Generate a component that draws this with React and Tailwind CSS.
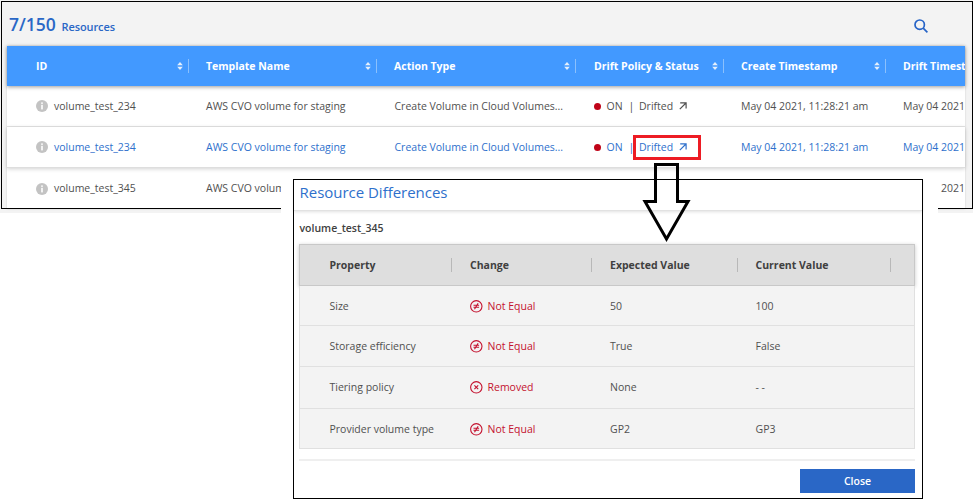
import React from "react";

const GRID = "grid grid-cols-[182px_188px_199px_148px_162px_79px]";
const DIFF_GRID = "grid grid-cols-[152px_140px_146px_153px_25px]";

const columns = [
  { label: "ID", pad: "pl-[29px]" },
  { label: "Template Name", pad: "pl-[17px]" },
  { label: "Action Type", pad: "pl-[17px]" },
  { label: "Drift Policy & Status", pad: "pl-[18px]" },
  { label: "Create Timestamp", pad: "pl-[17px]" },
  { label: "Drift Timest", pad: "pl-[17px]", last: true },
];

const diffs = [
  { property: "Size", change: "Not Equal", expected: "50", current: "100", h: "h-[40px] pt-[2px]" },
  { property: "Storage efficiency", change: "Not Equal", expected: "True", current: "False", h: "h-[41px]" },
  { property: "Tiering policy", change: "Removed", expected: "None", current: "- -", h: "h-[42px]" },
  { property: "Provider volume type", change: "Not Equal", expected: "GP2", current: "GP3", h: "h-[40px] pt-[1px]" },
];

function SortIcon() {
  return (
    <svg width="6" height="8" viewBox="0 0 6 8" className="mr-[5px] shrink-0" fill="#e4effb">
      <path d="M3 0 5.8 3.3H0.2Z" />
      <path d="M3 8 5.8 4.7H0.2Z" />
    </svg>
  );
}

function InfoIcon() {
  return (
    <svg width="12" height="12" viewBox="0 0 12 12" className="mr-[6px] shrink-0">
      <circle cx="6" cy="6" r="6" fill="#c3c3c3" />
      <rect x="5.2" y="2.4" width="1.6" height="1.5" fill="#fff" />
      <rect x="5.2" y="4.8" width="1.6" height="4.6" fill="#fff" />
    </svg>
  );
}

function DriftArrow() {
  return (
    <svg width="8" height="8" viewBox="0 0 8 8" className="ml-[6px] shrink-0" fill="none" stroke="currentColor" strokeWidth="1.2">
      <path d="M1.2 0.9H7.1V6.6M7 1 0.8 7.2" />
    </svg>
  );
}

function ChangeIcon({ removed }) {
  return (
    <svg width="13" height="13" viewBox="0 0 13 13" className="mr-[5px] shrink-0" fill="none" stroke="#c4122f" strokeWidth="1.1">
      <circle cx="6.3" cy="6.3" r="5.7" />
      {removed ? <path d="M4.4 4.4 8.2 8.2M8.2 4.4 4.4 8.2" /> : <path d="M3.5 5.3H9.1M3.5 7.3H9.1M8.1 3.3 4.5 9.3" />}
    </svg>
  );
}

function ResourceRow({ id, className, covered }) {
  return (
    <div className={`${GRID} items-center whitespace-nowrap overflow-hidden text-[10.5px] ${className}`}>
      <div className="flex items-center pl-[29px]">
        <InfoIcon />
        <span className="pt-px">{id}</span>
      </div>
      {covered ? (
        <>
          <div className="pl-[17px] pt-px">AWS CVO volum</div>
          <div className="col-start-6 pl-[55px] pt-px">2021</div>
        </>
      ) : (
        <>
          <div className="pl-[17px] pt-px">AWS CVO volume for staging</div>
          <div className="pl-[17.5px] pt-px">Create Volume in Cloud Volumes...</div>
          <div className="flex items-center pl-[17.5px]">
            <span className="size-[7px] rounded-full bg-[#c00418]" />
            <span className="ml-[6px] w-[22px] pt-px">ON</span>
            <span className="w-[10.5px] pt-px">|</span>
            <span className="pt-px">Drifted</span>
            <DriftArrow />
          </div>
          <div className="pl-[17px] pt-px">May 04 2021, 11:28:21 am</div>
          <div className="pl-[17px] pt-px">May 04 2021</div>
        </>
      )}
    </div>
  );
}

function ResourceTable() {
  return (
    <section className="h-[213px] w-[973px] overflow-hidden bg-[#f3f3f3] pl-[7px] pt-[7px]">
      <div className="flex h-[39px] items-center justify-between pr-[45px] text-[#2a67c6]">
        <div className="flex items-baseline pb-[2px] pl-[2px] font-semibold">
          <span className="w-[48px] text-[17.5px] leading-none">7/150</span>
          <span className="ml-[4.5px] text-[11px] tracking-[-0.1px]">Resources</span>
        </div>
        <svg width="14" height="14" viewBox="0 0 14 14" className="mb-[1px]" fill="none" stroke="#2563c7" strokeWidth="1.7">
          <circle cx="5.7" cy="5.7" r="4.7" />
          <path d="M9.2 9.2 13.4 13.4" />
        </svg>
      </div>
      <div className="w-[958px] bg-white shadow-[0_0_2px_rgba(0,0,0,0.15)]">
        <div className={`${GRID} relative h-[40px] items-center overflow-hidden whitespace-nowrap bg-[#4299ff] text-[10.5px] font-bold text-white shadow-[0_1px_4px_rgba(0,0,0,0.4)]`}>
          {columns.map((c) => (
            <div key={c.label} className={`flex h-[14px] items-center ${c.pad} ${c.last ? "" : "justify-between border-r border-[#8ac0fd]"}`}>
              <span className="pt-[2px]">{c.label}</span>
              {!c.last && <SortIcon />}
            </div>
          ))}
        </div>
        <ResourceRow id="volume_test_234" className="h-[41px] border-b border-[#e4e4e4] text-[#505050]" />
        <ResourceRow id="volume_test_234" className="relative h-[41px] border-b border-[#dedede] text-[#2e70cc] shadow-[0_1px_4px_rgba(0,0,0,0.18)]" />
        <ResourceRow id="volume_test_345" covered className="h-[41px] text-[#505050]" />
      </div>
    </section>
  );
}

function Differences() {
  return (
    <section className="absolute left-[293px] top-[179px] h-[320px] w-[630px] border border-black bg-white">
      <div className="h-[31px] w-full border-b border-[#e2e2e2] pl-[5.5px] shadow-[0_1px_3px_rgba(0,0,0,0.12)]">
        <h2 className="text-[15px] leading-[25px] tracking-[-0.02px] text-[#2e70cc]">Resource Differences</h2>
      </div>
      <div className="px-[5px]">
        <p className="h-[33px] pl-[0.5px] text-[10.5px] font-semibold leading-[34px] text-[#404040]">volume_test_345</p>
        <div className="w-[616px]">
          <div className={`${DIFF_GRID} h-[42px] items-center border border-[#c8c8c8] bg-[#dedede] text-[10.5px] font-bold text-[#404040] shadow-[0_1px_4px_rgba(0,0,0,0.22)]`}>
            <div className="flex h-[14px] items-center border-r border-[#b8b8b8] pl-[29.5px] pt-[2px]">Property</div>
            <div className="flex h-[14px] items-center border-r border-[#b8b8b8] pl-[18px] pt-[2px]">Change</div>
            <div className="flex h-[14px] items-center border-r border-[#b8b8b8] pl-[18px] pt-[2px]">Expected Value</div>
            <div className="flex h-[14px] items-center border-r border-[#b8b8b8] pl-[17.5px] pt-[2px]">Current Value</div>
          </div>
          {diffs.map((d) => (
            <div key={d.property} className={`${DIFF_GRID} ${d.h} items-center border-x border-b border-[#e0e0e0] bg-[#f3f3f3] text-[10.5px] text-[#505050]`}>
              <div className="pl-[29.5px] pt-px">{d.property}</div>
              <div className="flex items-center pl-[17.5px] text-[#c4122f]">
                <ChangeIcon removed={d.change === "Removed"} />
                <span className="pt-px font-medium">{d.change}</span>
              </div>
              <div className="pl-[18px] pt-px">{d.expected}</div>
              <div className="pl-[17.5px] pt-px">{d.current}</div>
            </div>
          ))}
        </div>
        <div className="mt-[10px] flex w-[616px] justify-end border-t-2 border-[#efefef] pt-[8px]">
          <button className="h-[24px] w-[115px] bg-[#2a67c6] pt-[2px] text-[10.5px] font-semibold text-white">Close</button>
        </div>
      </div>
    </section>
  );
}

export default function App() {
  return (
    <main className="relative h-[501px] w-[974px] overflow-hidden bg-white font-['Open_Sans','Noto_Sans',sans-serif]">
      <ResourceTable />
      <div className="absolute left-[1px] top-[1px] h-[208px] w-[972px] border border-black" />
      <div className="absolute left-[281px] top-[173px] h-[328px] w-[657px] bg-white" />
      <Differences />
      <div className="absolute left-[633px] top-[135px] h-[25px] w-[68px] border-3 border-[#ed1c24]" />
      <svg className="absolute left-[640px] top-[160px]" width="54" height="84" viewBox="640 160 54 84" fill="none" stroke="#000" strokeWidth="3">
        <path d="M655.5 164.5H677.5V201.5H688L666.5 239 645 201.5H655.5Z" />
      </svg>
    </main>
  );
}
